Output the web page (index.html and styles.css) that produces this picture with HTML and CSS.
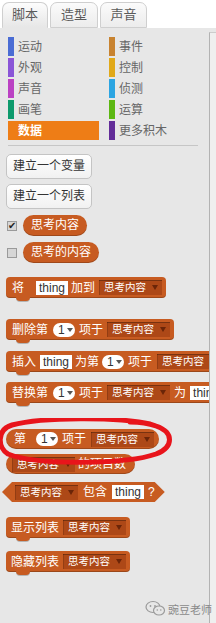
FILE: index.html
```html
<!DOCTYPE html>
<html lang="zh">
<head>
<meta charset="utf-8">
<title>Scratch 数据</title>
<link rel="stylesheet" href="styles.css">
</head>
<body>
<div class="app">
  <div class="tabs">
    <div class="tab tab-active t1">脚本</div>
    <div class="tab t2">造型</div>
    <div class="tab t3">声音</div>
  </div>
  <div class="main">
    <div class="content">
      <div class="cats">
        <div class="cat"><span class="bar c-motion"></span>运动</div>
        <div class="cat"><span class="bar c-events"></span>事件</div>
        <div class="cat"><span class="bar c-looks"></span>外观</div>
        <div class="cat"><span class="bar c-control"></span>控制</div>
        <div class="cat"><span class="bar c-sound"></span>声音</div>
        <div class="cat"><span class="bar c-sensing"></span>侦测</div>
        <div class="cat"><span class="bar c-pen"></span>画笔</div>
        <div class="cat"><span class="bar c-operators"></span>运算</div>
        <div class="cat cat-active"><span class="bar c-data"></span>数据</div>
        <div class="cat"><span class="bar c-more"></span>更多积木</div>
      </div>
      <div class="divider"></div>
      <div class="palette">
        <div class="btn b1">建立一个变量</div>
        <div class="btn b2">建立一个列表</div>
        <div class="checkrow r1"><span class="check checked">✔</span><span class="rep">思考内容</span></div>
        <div class="checkrow r2"><span class="check"></span><span class="rep">思考的内容</span></div>

        <div class="block k1">
          <span class="t">将</span>
          <span class="inp m12">thing</span>
          <span class="t m3">加到</span>
          <span class="dd m4">思考内容<i class="arr"></i></span>
        </div>

        <div class="block k2">
          <span class="t">删除第</span>
          <span class="num m5">1<i class="arr2"></i></span>
          <span class="t m4">项于</span>
          <span class="dd m4">思考内容<i class="arr"></i></span>
        </div>

        <div class="block k3">
          <span class="t">插入</span>
          <span class="inp m4">thing</span>
          <span class="t m3">为第</span>
          <span class="num m3">1<i class="arr2"></i></span>
          <span class="t m4">项于</span>
          <span class="dd m5">思考内容<i class="arr"></i></span>
        </div>

        <div class="block k4">
          <span class="t">替换第</span>
          <span class="num m5">1<i class="arr2"></i></span>
          <span class="t m4">项于</span>
          <span class="dd m4">思考内容<i class="arr"></i></span>
          <span class="t m4">为</span>
          <span class="inp m4">thing</span>
        </div>

        <div class="reporter k5">
          <span class="t">第</span>
          <span class="num m10">1<i class="arr2"></i></span>
          <span class="t m4">项于</span>
          <span class="dd m5">思考内容<i class="arr"></i></span>
        </div>

        <div class="reporter k6">
          <span class="dd">思考内容<i class="arr"></i></span>
          <span class="t m3">的项目数</span>
        </div>

        <div class="boolean k7">
          <span class="dd">思考内容<i class="arr"></i></span>
          <span class="t m5">包含</span>
          <span class="inp m5">thing</span>
          <span class="t m4">?</span>
        </div>

        <div class="block k8">
          <span class="t">显示列表</span>
          <span class="dd m4">思考内容<i class="arr"></i></span>
        </div>

        <div class="block k9">
          <span class="t">隐藏列表</span>
          <span class="dd m4">思考内容<i class="arr"></i></span>
        </div>
      </div>
    </div>
    <div class="scrollbar"></div>
  </div>

  <svg class="circle" width="180" height="50" viewBox="0 0 180 50">
    <path d="M152 6 C120 -1 45 -1 14 7 C-2 12 0 30 10 36 C40 48 130 46 158 36 C176 29 176 14 158 8 C150 5 140 4 132 4" fill="none" stroke="#e8141b" stroke-width="5" stroke-linecap="round"/>
  </svg>

  <div class="mark">
    <svg class="wx" width="21" height="17" viewBox="0 0 21 17">
      <ellipse cx="8" cy="7" rx="7" ry="5.5" fill="none" stroke="#9a9a9a" stroke-width="1.2"/>
      <ellipse cx="14" cy="10.5" rx="5.5" ry="4.5" fill="#e7e7e7" stroke="#9a9a9a" stroke-width="1.2"/>
      <circle cx="5.5" cy="6" r="0.9" fill="#9a9a9a"/>
      <circle cx="10" cy="6" r="0.9" fill="#9a9a9a"/>
      <circle cx="12.3" cy="10" r="0.8" fill="#9a9a9a"/>
      <circle cx="15.8" cy="10" r="0.8" fill="#9a9a9a"/>
    </svg>
    <span class="mark-text">豌豆老师</span>
  </div>
</div>
</body>
</html>
```

FILE: styles.css
```css
* { box-sizing: border-box; }
html, body { margin: 0; padding: 0; }
body {
  width: 216px;
  height: 623px;
  overflow: hidden;
  background: #ffffff;
  font-family: "Liberation Sans", "Noto Sans CJK SC", sans-serif;
}
.app {
  position: relative;
  width: 216px;
  height: 623px;
  display: flex;
  flex-direction: column;
}
.tabs {
  height: 28px;
  display: flex;
  align-items: flex-end;
  padding-left: 2px;
  gap: 2px;
  background: #ffffff;
  flex: none;
}
.tab {
  height: 26px;
  border: 1px solid #cfcfcf;
  border-radius: 7px 7px 0 0;
  background: linear-gradient(#fbfbfb, #ececec);
  color: #5a5a5a;
  font-size: 13px;
  line-height: 24px;
  text-align: center;
}
.tab-active {
  background: linear-gradient(#fdfdfd, #e7e7e7);
  border-bottom-color: #e7e7e7;
}
.t1 { width: 46px; }
.t2 { width: 48px; }
.t3 { width: 47px; }

.main {
  flex: 1;
  display: flex;
  background: #e7e7e7;
  min-height: 0;
}
.content {
  width: 209px;
  overflow: hidden;
  flex: none;
}
.scrollbar {
  width: 7px;
  margin-top: 4px;
  border-left: 1px solid #b3b3b3;
  border-top: 1px solid #cccccc;
  background: #efefef;
  flex: none;
}

.cats {
  display: grid;
  grid-template-columns: 101px 92px;
  grid-auto-rows: 19px;
  row-gap: 2px;
  padding: 9px 0 0 8px;
}
.cat {
  display: flex;
  align-items: center;
  font-size: 12px;
  color: #666666;
  line-height: 1;
  width: 91px;
}
.bar {
  width: 6px;
  height: 19px;
  margin-right: 4px;
  flex: none;
}
.c-motion { background: #4a6cd4; }
.c-looks { background: #8a55d7; }
.c-sound { background: #bb42c3; }
.c-pen { background: #0e9a6c; }
.c-data { background: #ee7d16; }
.c-events { background: #c88330; }
.c-control { background: #e1a91a; }
.c-sensing { background: #2ca5e2; }
.c-operators { background: #5cb712; }
.c-more { background: #632d99; }
.cat-active {
  background: #ee7d16;
  color: #ffffff;
  font-weight: bold;
}

.divider {
  margin: 5px 0 0 8px;
  width: 190px;
  height: 1px;
  background: #c6c6c6;
}

.palette {
  display: flex;
  flex-direction: column;
  align-items: flex-start;
  padding-left: 6px;
}
.btn {
  width: 86px;
  height: 25px;
  border: 1px solid #c4c4c4;
  border-radius: 5px;
  background: linear-gradient(#ffffff, #f1f1f1);
  color: #333333;
  font-size: 12px;
  line-height: 23px;
  text-align: center;
}
.b1 { margin-top: 8px; }
.b2 { margin-top: 5px; }

.checkrow {
  display: flex;
  align-items: center;
  height: 21px;
  margin-left: 1px;
}
.r1 { margin-top: 6px; }
.r2 { margin-top: 6px; }
.check {
  width: 10px;
  height: 10px;
  border: 1px solid #9a9a9a;
  background: #d6d6d6;
  margin-right: 6px;
  font-size: 10px;
  line-height: 8px;
  color: #222222;
  text-align: center;
  overflow: visible;
}
.rep {
  height: 21px;
  border-radius: 11px;
  background: #c75b21;
  color: #ffffff;
  font-size: 12px;
  line-height: 21px;
  padding: 0 8px;
  box-shadow: inset 0 -1px 0 rgba(0,0,0,0.2);
}

.block, .reporter, .boolean {
  position: relative;
  display: flex;
  align-items: center;
  width: max-content;
  white-space: nowrap;
  background: #c75b21;
  color: #ffffff;
  font-size: 12px;
  line-height: 1;
}
.block {
  height: 21px;
  border-radius: 4px;
  padding: 0 4px 0 6px;
  box-shadow: inset 0 -1px 0 rgba(0,0,0,0.22);
}
.block::after {
  content: "";
  position: absolute;
  left: 10px;
  bottom: -3px;
  width: 14px;
  height: 4px;
  background: #c75b21;
  border-radius: 0 0 4px 4px;
  box-shadow: 0 1px 0 rgba(0,0,0,0.22);
}
.reporter {
  height: 20px;
  border-radius: 10px;
  padding: 0 5px 0 8px;
  box-shadow: inset 0 -1px 0 rgba(0,0,0,0.2);
}
.boolean {
  height: 20px;
  padding: 0 10px 0 13px;
  clip-path: polygon(10px 0, calc(100% - 10px) 0, 100% 50%, calc(100% - 10px) 100%, 10px 100%, 0 50%);
}

.k1 { margin-top: 14px; }
.k2 { margin-top: 21px; }
.k3 { margin-top: 11px; }
.k4 { margin-top: 10px; }
.k5 { margin-top: 26px; }
.k6 { margin-top: 5px; padding-left: 6px; padding-right: 9px; }
.k7 { margin-top: 8px; margin-left: -4px; }
.k8 { margin-top: 15px; padding-left: 5px; }
.k9 { margin-top: 13px; padding-left: 5px; }

.m3 { margin-left: 3px; }
.m4 { margin-left: 4px; }
.m5 { margin-left: 5px; }
.m10 { margin-left: 10px; }
.m12 { margin-left: 12px; }

.inp {
  height: 14px;
  background: #ffffff;
  color: #333333;
  font-size: 12px;
  line-height: 14px;
  padding: 0 3px;
}
.num {
  height: 14px;
  width: 22px;
  border-radius: 7px;
  background: #ffffff;
  color: #333333;
  font-size: 12px;
  line-height: 14px;
  padding-left: 5px;
  display: flex;
  align-items: center;
}
.arr2 {
  width: 0;
  height: 0;
  border-left: 3.5px solid transparent;
  border-right: 3.5px solid transparent;
  border-top: 4px solid #555555;
  margin-left: 2px;
}
.dd {
  height: 15px;
  display: flex;
  align-items: center;
  background: #ad4817;
  color: #ffffff;
  font-size: 10.5px;
  padding: 0 4px 0 5px;
  box-shadow: inset 0 1px 0 rgba(0,0,0,0.3), inset 1px 0 0 rgba(0,0,0,0.15);
}
.arr {
  width: 0;
  height: 0;
  border-left: 3.5px solid transparent;
  border-right: 3.5px solid transparent;
  border-top: 5px solid #6b2508;
  margin-left: 6px;
}

.circle {
  position: absolute;
  left: -2px;
  top: 418px;
}
.mark {
  position: absolute;
  left: 145px;
  top: 600px;
  display: flex;
  align-items: center;
}
.mark-text {
  margin-left: 2px;
  font-size: 11px;
  color: #8a8a8a;
  font-family: "Noto Sans CJK SC", sans-serif;
}
```
